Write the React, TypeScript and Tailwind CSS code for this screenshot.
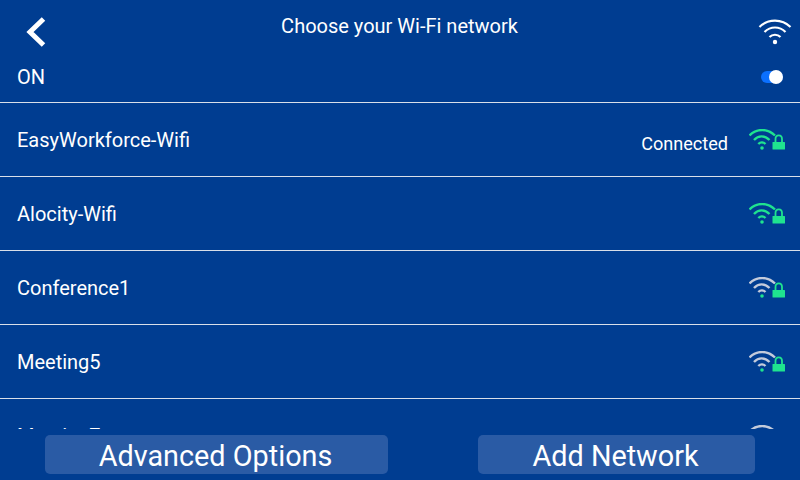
const networks = [
  { name: "EasyWorkforce-Wifi", status: "Connected", strong: true },
  { name: "Alocity-Wifi", status: "", strong: true },
  { name: "Conference1", status: "", strong: false },
  { name: "Meeting5", status: "", strong: false },
  { name: "Meeting7", status: "", strong: false },
];

function WifiLock({ strong }: { strong: boolean }) {
  const arc = strong ? "#1fe38f" : "#c3cbdb";
  return (
    <svg width="36" height="21" viewBox="0 0 36 21" fill="none">
      <path d="M0.500 6.500C7.500 -0.800 18.500 -0.800 26 6.500" stroke={arc} strokeWidth="2.400" />
      <path d="M5 11C9.500 6.200 15.500 6.200 20.500 11" stroke={arc} strokeWidth="2.400" />
      <path d="M9.300 15C11.500 12.800 14.300 12.800 16.500 15" stroke={arc} strokeWidth="2.400" />
      <circle cx="13" cy="19" r="1.800" fill="#1fe38f" />
      <path d="M26.500 13V10C26.500 5.200 33 5.200 33 10V13" stroke="#1fe38f" strokeWidth="1.800" />
      <rect x="23.500" y="13" width="12.500" height="7.500" rx="0.500" fill="#1fe38f" />
    </svg>
  );
}

export default function App() {
  return (
    <div className="w-[800px] h-[480px] overflow-hidden flex flex-col bg-[#003d91] text-white font-['Roboto',sans-serif]">
      {/* Header */}
      <div className="h-[103px] shrink-0 border-b border-[#d9dfe9] flex flex-col">
        <div className="h-[53px] flex items-center justify-between pl-[25px] pr-[8px]">
          <svg width="22" height="32" viewBox="0 0 22 32" fill="none" className="mt-[11px]">
            <path d="M18.500 3L5 16L18.500 29" stroke="#fff" strokeWidth="5" />
          </svg>
          <p className="text-[20px] leading-none mt-[-1px] mr-[6px]">Choose your Wi-Fi network</p>
          <svg width="34" height="29" viewBox="0 0 34 29" fill="none" className="mt-[10px]">
            <path d="M1.500 10C10 1.500 24 1.500 32.500 10" stroke="#fff" strokeWidth="2.200" />
            <path d="M6.500 15C12.500 9 21.500 9 27.500 15" stroke="#fff" strokeWidth="2.200" />
            <path d="M11.500 20C14.500 17 19.500 17 22.500 20" stroke="#fff" strokeWidth="2.200" />
            <circle cx="17" cy="25" r="2.200" fill="#fff" />
          </svg>
        </div>
        <div className="flex-1 flex items-center justify-between pl-[17px] pr-[17px] pb-[2px]">
          <span className="text-[20px] leading-none">ON</span>
          <div className="relative w-[22px] h-[12px] rounded-full bg-[#0b70ff]">
            <div className="absolute right-0 top-[-1px] w-[14px] h-[14px] rounded-full bg-white" />
          </div>
        </div>
      </div>

      {/* Network list */}
      <div className="h-[326px] shrink-0 overflow-hidden">
        {networks.map((n) => (
          <div key={n.name} className="h-[74px] border-b border-[#d9dfe9] flex items-center pl-[17px] pr-[15px]">
            <span className="text-[20px] leading-none">{n.name}</span>
            <span className="ml-auto mr-[21px] mt-[10px] text-[18.100px] leading-none">{n.status}</span>
            <WifiLock strong={n.strong} />
          </div>
        ))}
      </div>

      {/* Footer buttons */}
      <div className="flex-1 flex pt-[6px] pl-[45px] gap-[90px]">
        <button className="w-[343px] h-[39px] rounded-[5px] bg-[#2a5ba5] text-[28.800px] leading-none pt-[4px] pr-[2px]">Advanced Options</button>
        <button className="w-[277px] h-[39px] rounded-[5px] bg-[#2a5ba5] text-[28.800px] leading-none pt-[4px] pr-[2px]">Add Network</button>
      </div>
    </div>
  );
}
